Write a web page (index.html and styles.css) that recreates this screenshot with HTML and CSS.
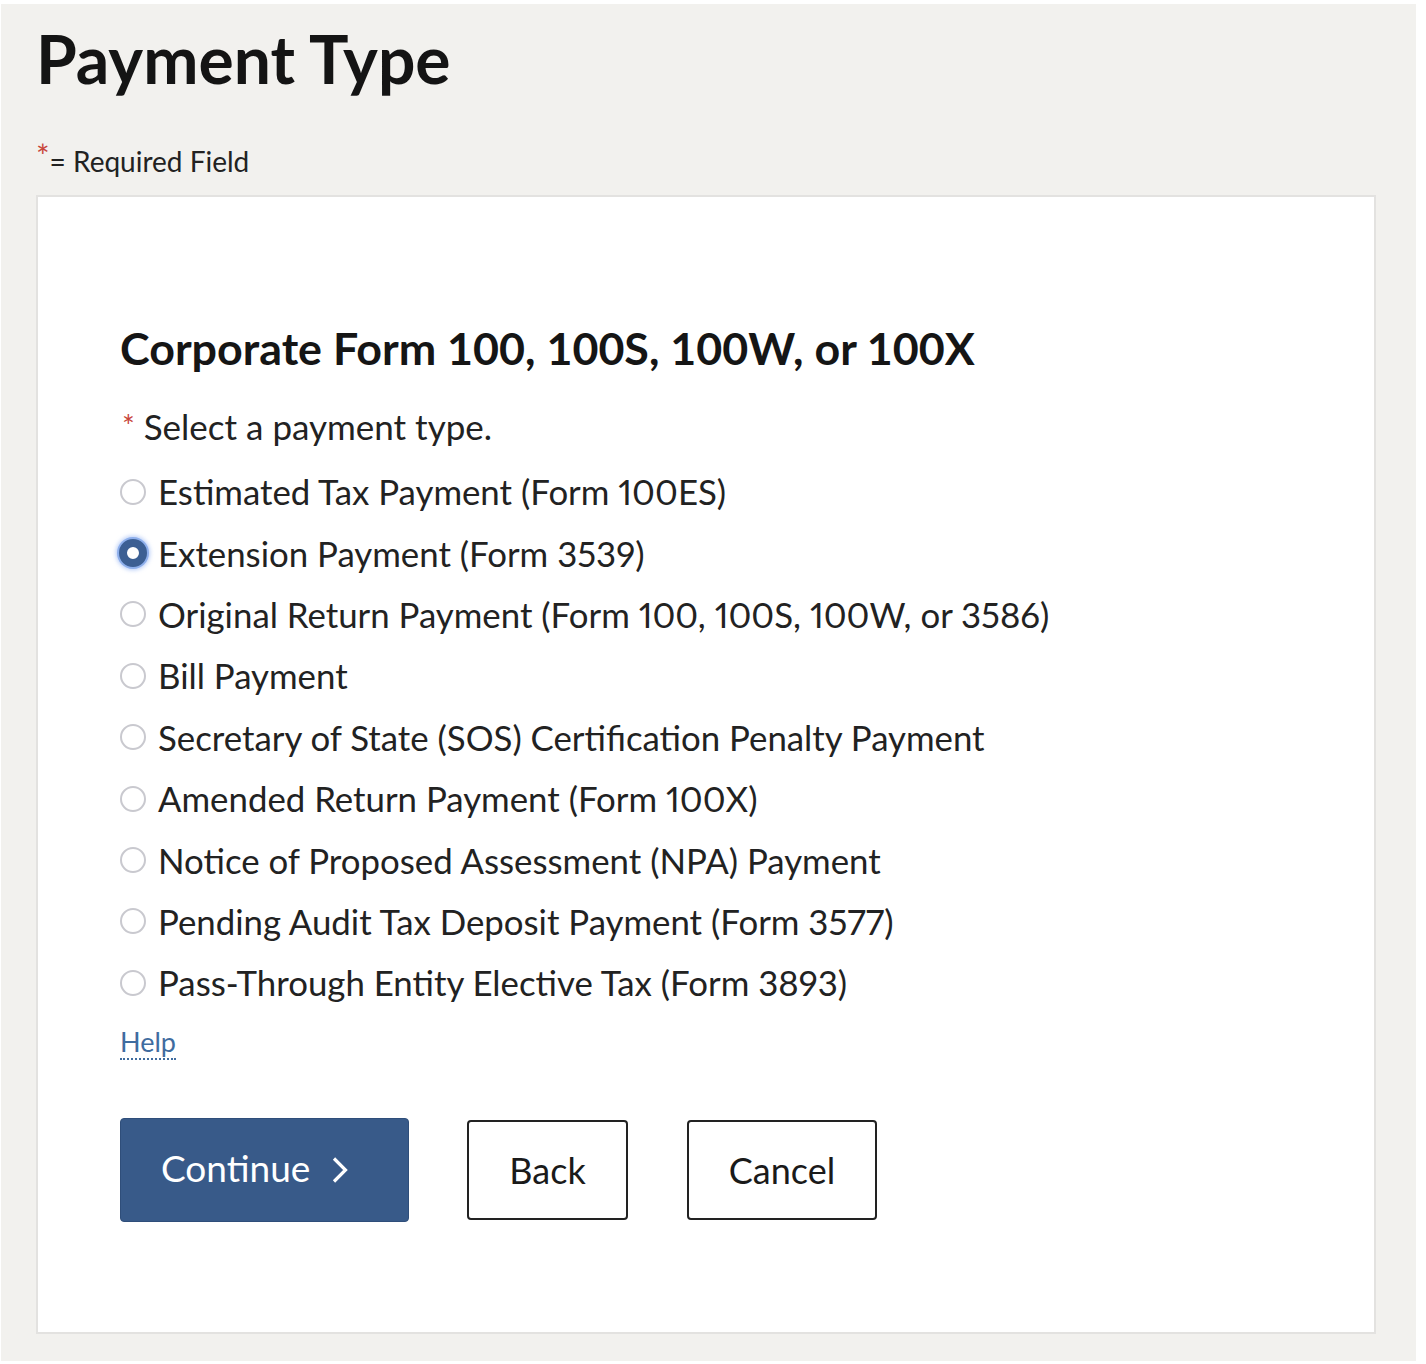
FILE: index.html
```html
<!DOCTYPE html>
<html lang="en">
<head>
<meta charset="utf-8">
<title>Payment Type</title>
<link rel="stylesheet" href="styles.css">
</head>
<body>
<div class="page">
  <h1 class="title">Payment Type</h1>
  <p class="required-note"><span class="req">*</span>= Required Field</p>
  <div class="card">
    <h2 class="form-title">Corporate Form 100, 100S, 100W, or 100X</h2>
    <p class="question"><span class="req">*</span> Select a payment type.</p>
    <ul class="options">
      <li class="option"><span class="radio"></span><span class="label">Estimated Tax Payment (Form 100ES)</span></li>
      <li class="option"><span class="radio checked"></span><span class="label">Extension Payment (Form 3539)</span></li>
      <li class="option"><span class="radio"></span><span class="label">Original Return Payment (Form 100, 100S, 100W, or 3586)</span></li>
      <li class="option"><span class="radio"></span><span class="label">Bill Payment</span></li>
      <li class="option"><span class="radio"></span><span class="label">Secretary of State (SOS) Certification Penalty Payment</span></li>
      <li class="option"><span class="radio"></span><span class="label">Amended Return Payment (Form 100X)</span></li>
      <li class="option"><span class="radio"></span><span class="label">Notice of Proposed Assessment (NPA) Payment</span></li>
      <li class="option"><span class="radio"></span><span class="label">Pending Audit Tax Deposit Payment (Form 3577)</span></li>
      <li class="option"><span class="radio"></span><span class="label">Pass-Through Entity Elective Tax (Form 3893)</span></li>
    </ul>
    <a class="help" href="#">Help</a>
    <div class="actions">
      <button class="btn btn-primary" type="button"><span>Continue</span>
        <svg class="chev" width="18" height="28" viewBox="0 0 18 28"><path d="M3 2.5 L14.5 14 L3 25.5" fill="none" stroke="#fff" stroke-width="3.2"/></svg>
      </button>
      <button class="btn btn-secondary btn-back" type="button">Back</button>
      <button class="btn btn-secondary btn-cancel" type="button">Cancel</button>
    </div>
  </div>
</div>
</body>
</html>
```

FILE: styles.css
```css
* { box-sizing: border-box; }
html, body { margin: 0; padding: 0; background: #ffffff; }
body { font-family: Lato, "Liberation Sans", sans-serif; color: #1b1b1b; }

.page {
  margin: 4px 10px 3px 1px;
  background: #f2f1ee;
  padding: 17px 40px 27px 35px;
  height: 1357px;
}

.title {
  margin: 0;
  font-size: 66px;
  font-weight: 700;
  line-height: 76px;
  color: #141414;
}

.required-note {
  margin: 48px 0 0 0;
  font-size: 28px;
  line-height: 32px;
  color: #222;
}
.req { color: #c8463a; }
.required-note .req { font-size: 32px; vertical-align: 4px; line-height: 0; }

.card {
  margin-top: 18px;
  background: #ffffff;
  border: 2px solid #e3e2e0;
  padding: 123px 40px 40px 82px;
  height: 1139px;
}

.form-title {
  margin: 0;
  font-size: 44.8px;
  font-weight: 700;
  line-height: 56px;
  color: #151515;
}

.question {
  margin: 28px 0 0 2px;
  font-size: 35px;
  line-height: 44px;
  color: #222;
}
.question .req { font-size: 30px; vertical-align: 3px; line-height: 0; }

.options {
  list-style: none;
  margin: 13px 0 0 0;
  padding: 0;
}
.option {
  display: flex;
  align-items: center;
  height: 61.4px;
  font-size: 34.8px;
  font-variant-numeric: proportional-nums;
  color: #222;
}
.radio {
  width: 26px;
  height: 26px;
  border-radius: 50%;
  border: 2px solid #c9c9cf;
  background: #fff;
  margin-right: 12px;
  flex: none;
}
.radio.checked {
  border: 8px solid #3c5f93;
  box-shadow: 0 0 0 2px #8fb0ec, 0 0 4px 3px rgba(120,160,240,0.55);
  width: 28px;
  height: 28px;
  margin-left: -1px;
  margin-right: 11px;
}

.help {
  display: inline-block;
  margin-top: 12px;
  font-size: 27px;
  line-height: 32px;
  color: #3f6c9f;
  text-decoration: none;
  border-bottom: 2px dotted #3f6c9f;
}

.actions {
  display: flex;
  align-items: center;
  margin-top: 58px;
}
.btn {
  font-family: inherit;
  font-size: 36px;
  border-radius: 4px;
  cursor: pointer;
}
.btn-primary {
  background: #385a89;
  color: #fff;
  border: 1px solid #2f4e7a;
  width: 289px;
  height: 104px;
  display: flex;
  align-items: center;
  justify-content: flex-start;
  gap: 21px;
  padding: 0 0 4px 40px;
  font-size: 37px;
}
.chev { margin-top: 4px; }
.btn-secondary {
  background: #fff;
  color: #1a1a1a;
  border: 2px solid #222;
  height: 100px;
  padding: 0;
}
.btn-back { width: 161px; margin-left: 58px; }
.btn-cancel { width: 190px; margin-left: 59px; }
```
